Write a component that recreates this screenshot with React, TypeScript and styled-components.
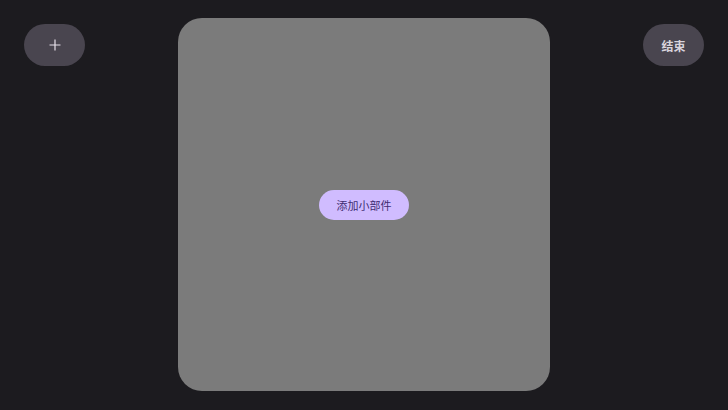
import React from "react";
import styled, { createGlobalStyle } from "styled-components";

const GlobalStyle = createGlobalStyle`
  html, body {
    margin: 0;
    padding: 0;
    background: #1c1b1f;
    font-family: "Noto Sans CJK SC", "Noto Sans", sans-serif;
  }
`;

const Screen = styled.div`
  width: 728px;
  height: 410px;
  display: grid;
  grid-template-columns: 1fr 372px 1fr;
  align-items: start;
  background: #1c1b1f;
  box-sizing: border-box;
`;

const SideCell = styled.div<{ $align: "start" | "end" }>`
  display: flex;
  justify-content: ${(p) => (p.$align === "start" ? "flex-start" : "flex-end")};
  padding: 24px 24px 0 24px;
`;

const RoundButton = styled.button`
  width: 61px;
  height: 42px;
  border-radius: 21px;
  border: none;
  background: #49454f;
  color: #d8d3dc;
  display: flex;
  align-items: center;
  justify-content: center;
  padding: 0;
  font-family: "Noto Sans CJK SC", sans-serif;
  font-size: 12px;
  font-weight: 700;
  cursor: pointer;
`;

const Panel = styled.div`
  margin-top: 18px;
  width: 372px;
  height: 373px;
  border-radius: 24px;
  background: #7b7b7b;
  display: flex;
  align-items: center;
  justify-content: center;
`;

const AddWidgetPill = styled.button`
  width: 90px;
  height: 30px;
  border-radius: 15px;
  border: none;
  background: #d0bcff;
  color: #3f2d72;
  font-family: "Noto Sans CJK SC", sans-serif;
  font-size: 11px;
  padding: 0;
  cursor: pointer;
`;

const PlusIcon = () => (
  <svg width="12" height="12" viewBox="0 0 12 12">
    <path d="M6 0.5v11M0.5 6h11" stroke="#e6e0e9" strokeWidth="1.2" fill="none" />
  </svg>
);

export default function App() {
  return (
    <>
      <GlobalStyle />
      <Screen>
        <SideCell $align="start">
          <RoundButton aria-label="添加">
            <PlusIcon />
          </RoundButton>
        </SideCell>
        <Panel>
          <AddWidgetPill>添加小部件</AddWidgetPill>
        </Panel>
        <SideCell $align="end">
          <RoundButton>结束</RoundButton>
        </SideCell>
      </Screen>
    </>
  );
}
